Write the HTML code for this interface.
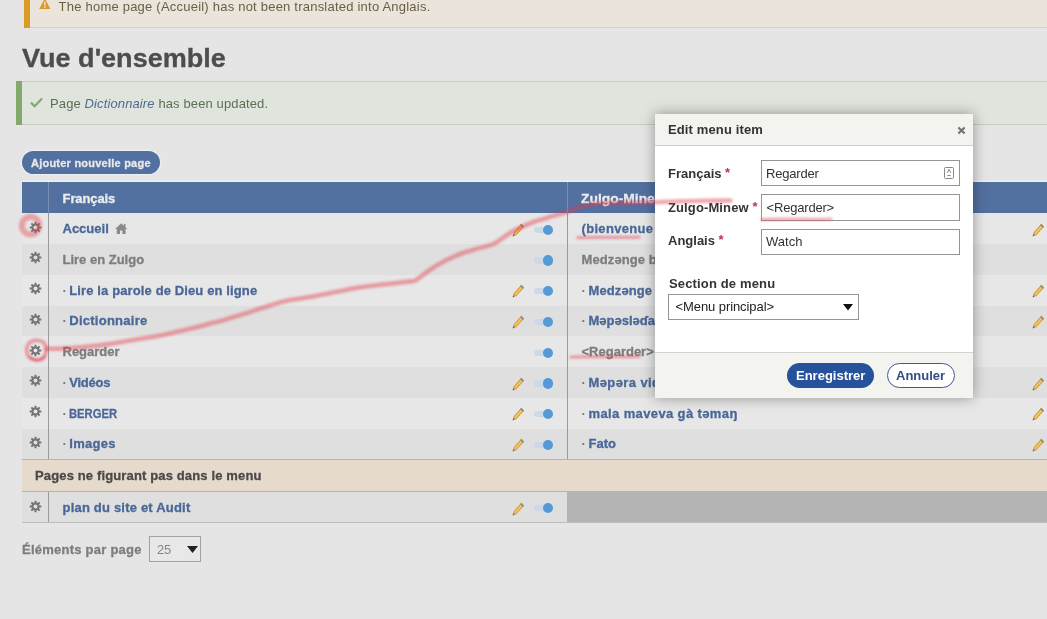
<!DOCTYPE html>
<html lang="fr">
<head>
<meta charset="utf-8">
<title>Vue d'ensemble</title>
<style>
*{box-sizing:border-box;margin:0;padding:0}
html,body{width:1047px;height:619px;overflow:hidden}
body{will-change:transform;background:#e5e5e5;font-family:"Liberation Sans",sans-serif;font-size:13px;color:#444;position:relative}
.a{position:absolute;white-space:nowrap;line-height:1}
.b{font-weight:bold}
#warn{left:24px;top:-6px;width:1040px;height:34px;background:#eae4db;border-bottom:1px solid #dfd0b6}
#warnl{left:24px;top:-6px;width:6px;height:34px;background:#db9b26}
#ok{left:16px;top:81px;width:1048px;height:44px;background:#dfe4dc;border-top:1px solid #c4cdbd;border-bottom:1px solid #c4cdbd}
#okl{left:16px;top:81px;width:6px;height:44px;background:#82a86a}
#addbtn{left:22px;top:151px;width:138px;height:23px;border-radius:12px;background:#5270a0;box-shadow:0 0 0 1.2px #eceff4}
#thead{left:22px;top:182px;width:1030px;height:31px;background:#5270a0;box-shadow:0 -1.3px 0 #edf1f8,0 1.3px 0 #eff1f6}
.row{left:22px;width:1030px}
.odd{background:#e7e7e7}
.even{background:#dfdfdf}
.vline{width:1px;background:#9a9a9a}
.nb,.lnk,.gry{-webkit-text-stroke:.3px currentColor}
.lnk{color:#4a6797;font-weight:bold}
.gry{color:#7d7d7d;font-weight:bold}
.dot{color:#777;font-weight:bold}
.trk{width:14px;height:6.2px;border-radius:3.1px;background:#cbdae8}
.knb{width:10.4px;height:10.4px;border-radius:50%;background:#5599d6}
#modal{left:655px;top:114px;width:318px;height:283.7px;background:#fff;box-shadow:0 0 13px rgba(0,0,0,.36)}
#mtitle{left:0;top:0;width:318px;height:32px;background:#f3f3ef;border-bottom:1px solid #cfcfcb}
#mfoot{left:0;top:238px;width:318px;height:45.7px;background:#f3f3ef;border-top:1px solid #d3d3cf}
.inp{left:106px;width:199px;height:26px;border:1px solid #959595;background:#fff}
.lab{color:#333;font-weight:bold}
.req{color:#c0334d;font-weight:bold;position:relative;top:-1px}
</style>
</head>
<body>

<!-- warning message -->
<div id="warn" class="a"></div><div id="warnl" class="a"></div>
<svg class="a" style="left:39px;top:-1.6px" width="11.6" height="12" viewBox="0 0 12 12"><path d="M6 0.2 L11.6 10.6 Q11.8 11.2 11.1 11.2 L0.9 11.2 Q0.2 11.2 0.4 10.6 Z" fill="#d99a2b"/><rect x="5.3" y="3.6" width="1.5" height="4" fill="#f3e6cf"/><rect x="5.3" y="8.4" width="1.5" height="1.5" fill="#f3e6cf"/></svg>
<div class="a" style="left:58.6px;top:0px;color:#6a5f45;letter-spacing:.22px">The home page (Accueil) has not been translated into Anglais.</div>

<!-- heading -->
<div class="a b nb" style="left:21.5px;top:46.4px;font-size:25px;color:#4d4d4d;transform:scaleX(1.082);transform-origin:0 0">Vue d'ensemble</div>

<!-- success message -->
<div id="ok" class="a"></div><div id="okl" class="a"></div>
<svg class="a" style="left:30px;top:97px" width="13" height="11" viewBox="0 0 13 11"><path d="M1 5.6 L4.6 9.2 L12 1.6" fill="none" stroke="#82a86a" stroke-width="2.2"/></svg>
<div class="a" style="left:50px;top:97.4px;color:#5d6e55;letter-spacing:.12px">Page <i style="color:#4f6a96">Dictionnaire</i> has been updated.</div>

<!-- add button -->
<div id="addbtn" class="a"></div>
<div class="a b nb" style="left:31px;top:157.5px;font-size:11px;color:#e9e9e9;letter-spacing:.23px">Ajouter nouvelle page</div>

<!-- table header -->
<div id="thead" class="a"></div>
<div class="a" style="left:48px;top:182px;width:1px;height:31px;background:#7a8fb3"></div>
<div class="a" style="left:567px;top:182px;width:1px;height:31px;background:#7a8fb3"></div>
<div class="a b nb" style="left:62.6px;top:192px;color:#ececec;letter-spacing:-.12px">Français</div>
<div class="a b nb" style="left:581px;top:192px;color:#ececec;transform:scaleX(1.065);transform-origin:0 0">Zulgo-Minew</div>

<!-- table rows -->
<div class="a row odd"  style="top:213px;height:31px"></div>
<div class="a row even" style="top:244px;height:31px"></div>
<div class="a row odd"  style="top:275px;height:31px"></div>
<div class="a row even" style="top:306px;height:30px"></div>
<div class="a row odd"  style="top:336px;height:31px"></div>
<div class="a row even" style="top:367px;height:31px"></div>
<div class="a row odd"  style="top:398px;height:31px"></div>
<div class="a row even" style="top:429px;height:30px"></div>
<div class="a row" style="top:459px;height:33px;background:#e6dacd;border-top:1px solid #b9b4ae;border-bottom:1px solid #b9b4ae"></div>
<div class="a row even" style="top:492px;height:31px;border-bottom:1px solid #bcbcbc"></div>
<div class="a" style="left:567px;top:492px;width:490px;height:30px;background:#b4b4b4"></div>
<div class="a vline" style="left:48px;top:213px;height:246px"></div>
<div class="a vline" style="left:567px;top:213px;height:246px"></div>
<div class="a vline" style="left:48px;top:492px;height:30px"></div>
<div class="a b nb" style="left:35px;top:468.6px;color:#4a4a4a;letter-spacing:.14px">Pages ne figurant pas dans le menu</div>

<!-- cells -->
<svg class="a" style="left:29.4px;top:220.7px" width="13" height="13" viewBox="-6.5 -6.5 13 13"><path d="M-1.47 -3.83L-1.06 -3.96L-0.92 -5.83L0.92 -5.83L1.06 -3.96L1.67 -3.75L2.05 -3.55L3.47 -4.77L4.77 -3.47L3.55 -2.05L3.83 -1.47L3.96 -1.06L5.83 -0.92L5.83 0.92L3.96 1.06L3.75 1.67L3.55 2.05L4.77 3.47L3.47 4.77L2.05 3.55L1.47 3.83L1.06 3.96L0.92 5.83L-0.92 5.83L-1.06 3.96L-1.67 3.75L-2.05 3.55L-3.47 4.77L-4.77 3.47L-3.55 2.05L-3.83 1.47L-3.96 1.06L-5.83 0.92L-5.83 -0.92L-3.96 -1.06L-3.75 -1.67L-3.55 -2.05L-4.77 -3.47L-3.47 -4.77L-2.05 -3.55Z" fill="#757575"/><circle r="1.95" fill="#e7e7e7"/></svg>
<div class="a lnk" style="left:62.5px;top:222.1px;">Accueil</div>
<svg class="a" style="left:114.7px;top:222.7px" width="12.4" height="11.6" viewBox="0 0 12.4 11.6"><path d="M6.2 0.2L0 6H1.8V11.4H5V7.6H7.4V11.4H10.6V6H12.4Z" fill="#8a8a8a"/><rect x="8.9" y="0.9" width="1.6" height="3.2" fill="#8a8a8a"/></svg>
<svg class="a" style="left:512px;top:222.8px" width="13" height="14.2" viewBox="0 0 13 13" preserveAspectRatio="none"><path d="M9.3 0.8L12 3.5L4.2 11.3L1.5 8.6Z" fill="#d59d3a"/><path d="M10 1.6L11.2 2.8L3.5 10.5L2.3 9.3Z" fill="#efcb68"/><path d="M1.5 8.6L4.2 11.3L0.7 12.2Z" fill="#b9935a"/><path d="M0.7 12.2L1.1 10.7L2.2 11.8Z" fill="#5e4a2a"/><path d="M9.3 0.8L12 3.5L10.9 4.6L8.2 1.9Z" fill="#8f8585"/></svg>
<div class="a trk" style="left:534px;top:226.65px"></div><div class="a knb" style="left:542.65px;top:224.55px"></div>
<div class="a lnk" style="left:581.5px;top:222.1px;letter-spacing:0.33px">(bienvenue à tous)</div>
<svg class="a" style="left:1031.5px;top:222.8px" width="13" height="14.2" viewBox="0 0 13 13" preserveAspectRatio="none"><path d="M9.3 0.8L12 3.5L4.2 11.3L1.5 8.6Z" fill="#d59d3a"/><path d="M10 1.6L11.2 2.8L3.5 10.5L2.3 9.3Z" fill="#efcb68"/><path d="M1.5 8.6L4.2 11.3L0.7 12.2Z" fill="#b9935a"/><path d="M0.7 12.2L1.1 10.7L2.2 11.8Z" fill="#5e4a2a"/><path d="M9.3 0.8L12 3.5L10.9 4.6L8.2 1.9Z" fill="#8f8585"/></svg>
<svg class="a" style="left:29.4px;top:251.45px" width="13" height="13" viewBox="-6.5 -6.5 13 13"><path d="M-1.47 -3.83L-1.06 -3.96L-0.92 -5.83L0.92 -5.83L1.06 -3.96L1.67 -3.75L2.05 -3.55L3.47 -4.77L4.77 -3.47L3.55 -2.05L3.83 -1.47L3.96 -1.06L5.83 -0.92L5.83 0.92L3.96 1.06L3.75 1.67L3.55 2.05L4.77 3.47L3.47 4.77L2.05 3.55L1.47 3.83L1.06 3.96L0.92 5.83L-0.92 5.83L-1.06 3.96L-1.67 3.75L-2.05 3.55L-3.47 4.77L-4.77 3.47L-3.55 2.05L-3.83 1.47L-3.96 1.06L-5.83 0.92L-5.83 -0.92L-3.96 -1.06L-3.75 -1.67L-3.55 -2.05L-4.77 -3.47L-3.47 -4.77L-2.05 -3.55Z" fill="#757575"/><circle r="1.95" fill="#dfdfdf"/></svg>
<div class="a gry" style="left:62.5px;top:252.85px;">Lire en Zulgo</div>
<div class="a trk" style="left:534px;top:257.4px"></div><div class="a knb" style="left:542.65px;top:255.3px"></div>
<div class="a gry" style="left:581.5px;top:252.85px;letter-spacing:0.1px">Medzǝnge bazlam</div>
<svg class="a" style="left:29.4px;top:282.2px" width="13" height="13" viewBox="-6.5 -6.5 13 13"><path d="M-1.47 -3.83L-1.06 -3.96L-0.92 -5.83L0.92 -5.83L1.06 -3.96L1.67 -3.75L2.05 -3.55L3.47 -4.77L4.77 -3.47L3.55 -2.05L3.83 -1.47L3.96 -1.06L5.83 -0.92L5.83 0.92L3.96 1.06L3.75 1.67L3.55 2.05L4.77 3.47L3.47 4.77L2.05 3.55L1.47 3.83L1.06 3.96L0.92 5.83L-0.92 5.83L-1.06 3.96L-1.67 3.75L-2.05 3.55L-3.47 4.77L-4.77 3.47L-3.55 2.05L-3.83 1.47L-3.96 1.06L-5.83 0.92L-5.83 -0.92L-3.96 -1.06L-3.75 -1.67L-3.55 -2.05L-4.77 -3.47L-3.47 -4.77L-2.05 -3.55Z" fill="#757575"/><circle r="1.95" fill="#e7e7e7"/></svg>
<div class="a dot" style="left:62.5px;top:283.6px">·</div>
<div class="a lnk" style="left:69.3px;top:283.6px;letter-spacing:0.12px">Lire la parole de Dieu en ligne</div>
<svg class="a" style="left:512px;top:284.3px" width="13" height="14.2" viewBox="0 0 13 13" preserveAspectRatio="none"><path d="M9.3 0.8L12 3.5L4.2 11.3L1.5 8.6Z" fill="#d59d3a"/><path d="M10 1.6L11.2 2.8L3.5 10.5L2.3 9.3Z" fill="#efcb68"/><path d="M1.5 8.6L4.2 11.3L0.7 12.2Z" fill="#b9935a"/><path d="M0.7 12.2L1.1 10.7L2.2 11.8Z" fill="#5e4a2a"/><path d="M9.3 0.8L12 3.5L10.9 4.6L8.2 1.9Z" fill="#8f8585"/></svg>
<div class="a trk" style="left:534px;top:288.15px"></div><div class="a knb" style="left:542.65px;top:286.05px"></div>
<div class="a dot" style="left:581.5px;top:283.6px">·</div>
<div class="a lnk" style="left:588.5px;top:283.6px;letter-spacing:0.1px">Medzǝnge bazlam</div>
<svg class="a" style="left:1031.5px;top:284.3px" width="13" height="14.2" viewBox="0 0 13 13" preserveAspectRatio="none"><path d="M9.3 0.8L12 3.5L4.2 11.3L1.5 8.6Z" fill="#d59d3a"/><path d="M10 1.6L11.2 2.8L3.5 10.5L2.3 9.3Z" fill="#efcb68"/><path d="M1.5 8.6L4.2 11.3L0.7 12.2Z" fill="#b9935a"/><path d="M0.7 12.2L1.1 10.7L2.2 11.8Z" fill="#5e4a2a"/><path d="M9.3 0.8L12 3.5L10.9 4.6L8.2 1.9Z" fill="#8f8585"/></svg>
<svg class="a" style="left:29.4px;top:312.95px" width="13" height="13" viewBox="-6.5 -6.5 13 13"><path d="M-1.47 -3.83L-1.06 -3.96L-0.92 -5.83L0.92 -5.83L1.06 -3.96L1.67 -3.75L2.05 -3.55L3.47 -4.77L4.77 -3.47L3.55 -2.05L3.83 -1.47L3.96 -1.06L5.83 -0.92L5.83 0.92L3.96 1.06L3.75 1.67L3.55 2.05L4.77 3.47L3.47 4.77L2.05 3.55L1.47 3.83L1.06 3.96L0.92 5.83L-0.92 5.83L-1.06 3.96L-1.67 3.75L-2.05 3.55L-3.47 4.77L-4.77 3.47L-3.55 2.05L-3.83 1.47L-3.96 1.06L-5.83 0.92L-5.83 -0.92L-3.96 -1.06L-3.75 -1.67L-3.55 -2.05L-4.77 -3.47L-3.47 -4.77L-2.05 -3.55Z" fill="#757575"/><circle r="1.95" fill="#dfdfdf"/></svg>
<div class="a dot" style="left:62.5px;top:314.35px">·</div>
<div class="a lnk" style="left:69.3px;top:314.35px;letter-spacing:0.25px">Dictionnaire</div>
<svg class="a" style="left:512px;top:315.05px" width="13" height="14.2" viewBox="0 0 13 13" preserveAspectRatio="none"><path d="M9.3 0.8L12 3.5L4.2 11.3L1.5 8.6Z" fill="#d59d3a"/><path d="M10 1.6L11.2 2.8L3.5 10.5L2.3 9.3Z" fill="#efcb68"/><path d="M1.5 8.6L4.2 11.3L0.7 12.2Z" fill="#b9935a"/><path d="M0.7 12.2L1.1 10.7L2.2 11.8Z" fill="#5e4a2a"/><path d="M9.3 0.8L12 3.5L10.9 4.6L8.2 1.9Z" fill="#8f8585"/></svg>
<div class="a trk" style="left:534px;top:318.9px"></div><div class="a knb" style="left:542.65px;top:316.8px"></div>
<div class="a dot" style="left:581.5px;top:314.35px">·</div>
<div class="a lnk" style="left:588.5px;top:314.35px;">Mǝpǝslǝɗa bazlam</div>
<svg class="a" style="left:1031.5px;top:315.05px" width="13" height="14.2" viewBox="0 0 13 13" preserveAspectRatio="none"><path d="M9.3 0.8L12 3.5L4.2 11.3L1.5 8.6Z" fill="#d59d3a"/><path d="M10 1.6L11.2 2.8L3.5 10.5L2.3 9.3Z" fill="#efcb68"/><path d="M1.5 8.6L4.2 11.3L0.7 12.2Z" fill="#b9935a"/><path d="M0.7 12.2L1.1 10.7L2.2 11.8Z" fill="#5e4a2a"/><path d="M9.3 0.8L12 3.5L10.9 4.6L8.2 1.9Z" fill="#8f8585"/></svg>
<svg class="a" style="left:29.4px;top:343.7px" width="13" height="13" viewBox="-6.5 -6.5 13 13"><path d="M-1.47 -3.83L-1.06 -3.96L-0.92 -5.83L0.92 -5.83L1.06 -3.96L1.67 -3.75L2.05 -3.55L3.47 -4.77L4.77 -3.47L3.55 -2.05L3.83 -1.47L3.96 -1.06L5.83 -0.92L5.83 0.92L3.96 1.06L3.75 1.67L3.55 2.05L4.77 3.47L3.47 4.77L2.05 3.55L1.47 3.83L1.06 3.96L0.92 5.83L-0.92 5.83L-1.06 3.96L-1.67 3.75L-2.05 3.55L-3.47 4.77L-4.77 3.47L-3.55 2.05L-3.83 1.47L-3.96 1.06L-5.83 0.92L-5.83 -0.92L-3.96 -1.06L-3.75 -1.67L-3.55 -2.05L-4.77 -3.47L-3.47 -4.77L-2.05 -3.55Z" fill="#757575"/><circle r="1.95" fill="#e7e7e7"/></svg>
<div class="a gry" style="left:62.5px;top:345.1px;">Regarder</div>
<div class="a trk" style="left:534px;top:349.65px"></div><div class="a knb" style="left:542.65px;top:347.55px"></div>
<div class="a gry" style="left:581.5px;top:345.1px;">&lt;Regarder&gt;</div>
<svg class="a" style="left:29.4px;top:374.45px" width="13" height="13" viewBox="-6.5 -6.5 13 13"><path d="M-1.47 -3.83L-1.06 -3.96L-0.92 -5.83L0.92 -5.83L1.06 -3.96L1.67 -3.75L2.05 -3.55L3.47 -4.77L4.77 -3.47L3.55 -2.05L3.83 -1.47L3.96 -1.06L5.83 -0.92L5.83 0.92L3.96 1.06L3.75 1.67L3.55 2.05L4.77 3.47L3.47 4.77L2.05 3.55L1.47 3.83L1.06 3.96L0.92 5.83L-0.92 5.83L-1.06 3.96L-1.67 3.75L-2.05 3.55L-3.47 4.77L-4.77 3.47L-3.55 2.05L-3.83 1.47L-3.96 1.06L-5.83 0.92L-5.83 -0.92L-3.96 -1.06L-3.75 -1.67L-3.55 -2.05L-4.77 -3.47L-3.47 -4.77L-2.05 -3.55Z" fill="#757575"/><circle r="1.95" fill="#dfdfdf"/></svg>
<div class="a dot" style="left:62.5px;top:375.85px">·</div>
<div class="a lnk" style="left:69.3px;top:375.85px;letter-spacing:-0.25px">Vidéos</div>
<svg class="a" style="left:512px;top:376.55px" width="13" height="14.2" viewBox="0 0 13 13" preserveAspectRatio="none"><path d="M9.3 0.8L12 3.5L4.2 11.3L1.5 8.6Z" fill="#d59d3a"/><path d="M10 1.6L11.2 2.8L3.5 10.5L2.3 9.3Z" fill="#efcb68"/><path d="M1.5 8.6L4.2 11.3L0.7 12.2Z" fill="#b9935a"/><path d="M0.7 12.2L1.1 10.7L2.2 11.8Z" fill="#5e4a2a"/><path d="M9.3 0.8L12 3.5L10.9 4.6L8.2 1.9Z" fill="#8f8585"/></svg>
<div class="a trk" style="left:534px;top:380.4px"></div><div class="a knb" style="left:542.65px;top:378.3px"></div>
<div class="a dot" style="left:581.5px;top:375.85px">·</div>
<div class="a lnk" style="left:588.5px;top:375.85px;letter-spacing:0.4px">Mǝpǝra video</div>
<svg class="a" style="left:1031.5px;top:376.55px" width="13" height="14.2" viewBox="0 0 13 13" preserveAspectRatio="none"><path d="M9.3 0.8L12 3.5L4.2 11.3L1.5 8.6Z" fill="#d59d3a"/><path d="M10 1.6L11.2 2.8L3.5 10.5L2.3 9.3Z" fill="#efcb68"/><path d="M1.5 8.6L4.2 11.3L0.7 12.2Z" fill="#b9935a"/><path d="M0.7 12.2L1.1 10.7L2.2 11.8Z" fill="#5e4a2a"/><path d="M9.3 0.8L12 3.5L10.9 4.6L8.2 1.9Z" fill="#8f8585"/></svg>
<svg class="a" style="left:29.4px;top:405.2px" width="13" height="13" viewBox="-6.5 -6.5 13 13"><path d="M-1.47 -3.83L-1.06 -3.96L-0.92 -5.83L0.92 -5.83L1.06 -3.96L1.67 -3.75L2.05 -3.55L3.47 -4.77L4.77 -3.47L3.55 -2.05L3.83 -1.47L3.96 -1.06L5.83 -0.92L5.83 0.92L3.96 1.06L3.75 1.67L3.55 2.05L4.77 3.47L3.47 4.77L2.05 3.55L1.47 3.83L1.06 3.96L0.92 5.83L-0.92 5.83L-1.06 3.96L-1.67 3.75L-2.05 3.55L-3.47 4.77L-4.77 3.47L-3.55 2.05L-3.83 1.47L-3.96 1.06L-5.83 0.92L-5.83 -0.92L-3.96 -1.06L-3.75 -1.67L-3.55 -2.05L-4.77 -3.47L-3.47 -4.77L-2.05 -3.55Z" fill="#757575"/><circle r="1.95" fill="#e7e7e7"/></svg>
<div class="a dot" style="left:62.5px;top:406.6px">·</div>
<div class="a lnk" style="left:69.3px;top:406.6px;transform:scaleX(0.865);transform-origin:0 0">BERGER</div>
<svg class="a" style="left:512px;top:407.3px" width="13" height="14.2" viewBox="0 0 13 13" preserveAspectRatio="none"><path d="M9.3 0.8L12 3.5L4.2 11.3L1.5 8.6Z" fill="#d59d3a"/><path d="M10 1.6L11.2 2.8L3.5 10.5L2.3 9.3Z" fill="#efcb68"/><path d="M1.5 8.6L4.2 11.3L0.7 12.2Z" fill="#b9935a"/><path d="M0.7 12.2L1.1 10.7L2.2 11.8Z" fill="#5e4a2a"/><path d="M9.3 0.8L12 3.5L10.9 4.6L8.2 1.9Z" fill="#8f8585"/></svg>
<div class="a trk" style="left:534px;top:411.15px"></div><div class="a knb" style="left:542.65px;top:409.05px"></div>
<div class="a dot" style="left:581.5px;top:406.6px">·</div>
<div class="a lnk" style="left:588.5px;top:406.6px;letter-spacing:0.38px">mala maveva gà tǝmaŋ</div>
<svg class="a" style="left:1031.5px;top:407.3px" width="13" height="14.2" viewBox="0 0 13 13" preserveAspectRatio="none"><path d="M9.3 0.8L12 3.5L4.2 11.3L1.5 8.6Z" fill="#d59d3a"/><path d="M10 1.6L11.2 2.8L3.5 10.5L2.3 9.3Z" fill="#efcb68"/><path d="M1.5 8.6L4.2 11.3L0.7 12.2Z" fill="#b9935a"/><path d="M0.7 12.2L1.1 10.7L2.2 11.8Z" fill="#5e4a2a"/><path d="M9.3 0.8L12 3.5L10.9 4.6L8.2 1.9Z" fill="#8f8585"/></svg>
<svg class="a" style="left:29.4px;top:435.95px" width="13" height="13" viewBox="-6.5 -6.5 13 13"><path d="M-1.47 -3.83L-1.06 -3.96L-0.92 -5.83L0.92 -5.83L1.06 -3.96L1.67 -3.75L2.05 -3.55L3.47 -4.77L4.77 -3.47L3.55 -2.05L3.83 -1.47L3.96 -1.06L5.83 -0.92L5.83 0.92L3.96 1.06L3.75 1.67L3.55 2.05L4.77 3.47L3.47 4.77L2.05 3.55L1.47 3.83L1.06 3.96L0.92 5.83L-0.92 5.83L-1.06 3.96L-1.67 3.75L-2.05 3.55L-3.47 4.77L-4.77 3.47L-3.55 2.05L-3.83 1.47L-3.96 1.06L-5.83 0.92L-5.83 -0.92L-3.96 -1.06L-3.75 -1.67L-3.55 -2.05L-4.77 -3.47L-3.47 -4.77L-2.05 -3.55Z" fill="#757575"/><circle r="1.95" fill="#dfdfdf"/></svg>
<div class="a dot" style="left:62.5px;top:437.35px">·</div>
<div class="a lnk" style="left:69.3px;top:437.35px;letter-spacing:0.3px">Images</div>
<svg class="a" style="left:512px;top:438.05px" width="13" height="14.2" viewBox="0 0 13 13" preserveAspectRatio="none"><path d="M9.3 0.8L12 3.5L4.2 11.3L1.5 8.6Z" fill="#d59d3a"/><path d="M10 1.6L11.2 2.8L3.5 10.5L2.3 9.3Z" fill="#efcb68"/><path d="M1.5 8.6L4.2 11.3L0.7 12.2Z" fill="#b9935a"/><path d="M0.7 12.2L1.1 10.7L2.2 11.8Z" fill="#5e4a2a"/><path d="M9.3 0.8L12 3.5L10.9 4.6L8.2 1.9Z" fill="#8f8585"/></svg>
<div class="a trk" style="left:534px;top:441.9px"></div><div class="a knb" style="left:542.65px;top:439.8px"></div>
<div class="a dot" style="left:581.5px;top:437.35px">·</div>
<div class="a lnk" style="left:588.5px;top:437.35px;">Fato</div>
<svg class="a" style="left:1031.5px;top:438.05px" width="13" height="14.2" viewBox="0 0 13 13" preserveAspectRatio="none"><path d="M9.3 0.8L12 3.5L4.2 11.3L1.5 8.6Z" fill="#d59d3a"/><path d="M10 1.6L11.2 2.8L3.5 10.5L2.3 9.3Z" fill="#efcb68"/><path d="M1.5 8.6L4.2 11.3L0.7 12.2Z" fill="#b9935a"/><path d="M0.7 12.2L1.1 10.7L2.2 11.8Z" fill="#5e4a2a"/><path d="M9.3 0.8L12 3.5L10.9 4.6L8.2 1.9Z" fill="#8f8585"/></svg>
<svg class="a" style="left:29.4px;top:499.7px" width="13" height="13" viewBox="-6.5 -6.5 13 13"><path d="M-1.47 -3.83L-1.06 -3.96L-0.92 -5.83L0.92 -5.83L1.06 -3.96L1.67 -3.75L2.05 -3.55L3.47 -4.77L4.77 -3.47L3.55 -2.05L3.83 -1.47L3.96 -1.06L5.83 -0.92L5.83 0.92L3.96 1.06L3.75 1.67L3.55 2.05L4.77 3.47L3.47 4.77L2.05 3.55L1.47 3.83L1.06 3.96L0.92 5.83L-0.92 5.83L-1.06 3.96L-1.67 3.75L-2.05 3.55L-3.47 4.77L-4.77 3.47L-3.55 2.05L-3.83 1.47L-3.96 1.06L-5.83 0.92L-5.83 -0.92L-3.96 -1.06L-3.75 -1.67L-3.55 -2.05L-4.77 -3.47L-3.47 -4.77L-2.05 -3.55Z" fill="#757575"/><circle r="1.95" fill="#dfdfdf"/></svg>
<div class="a lnk" style="left:62.5px;top:501.1px;letter-spacing:0.2px">plan du site et Audit</div>
<svg class="a" style="left:512px;top:501.8px" width="13" height="14.2" viewBox="0 0 13 13" preserveAspectRatio="none"><path d="M9.3 0.8L12 3.5L4.2 11.3L1.5 8.6Z" fill="#d59d3a"/><path d="M10 1.6L11.2 2.8L3.5 10.5L2.3 9.3Z" fill="#efcb68"/><path d="M1.5 8.6L4.2 11.3L0.7 12.2Z" fill="#b9935a"/><path d="M0.7 12.2L1.1 10.7L2.2 11.8Z" fill="#5e4a2a"/><path d="M9.3 0.8L12 3.5L10.9 4.6L8.2 1.9Z" fill="#8f8585"/></svg>
<div class="a trk" style="left:534px;top:504.85px"></div><div class="a knb" style="left:542.65px;top:502.75px"></div>

<!-- pager -->
<div class="a gry" style="left:22px;top:542.5px;letter-spacing:.24px">Éléments par page</div>
<div class="a" style="left:149px;top:536px;width:52px;height:25.6px;border:1px solid #a2a2a2;background:#e8e8e8"></div>
<div class="a" style="left:157px;top:543px;color:#858585;letter-spacing:-.2px">25</div>
<svg class="a" style="left:187px;top:546px" width="11" height="7" viewBox="0 0 11 7"><path d="M0 0H11L5.5 7Z" fill="#222"/></svg>

<!-- modal dialog -->
<div id="modal" class="a">
  <div id="mtitle" class="a"></div>
  <div class="a lab" style="left:13px;top:8.5px;letter-spacing:.13px">Edit menu item</div>
  <svg class="a" style="left:302px;top:12px" width="9" height="9" viewBox="0 0 9 9"><path d="M1.4 1.4L7.6 7.6M7.6 1.4L1.4 7.6" stroke="#727272" stroke-width="2.1"/></svg>

  <div class="a lab" style="left:13px;top:52.5px">Français <span class="req">*</span></div>
  <div class="a inp" style="top:46px"></div>
  <div class="a" style="left:111px;top:53px;color:#333;letter-spacing:-.2px">Regarder</div>
  <svg class="a" style="left:289px;top:53px" width="11" height="12" viewBox="0 0 11 12"><rect x="0.5" y="0.5" width="9" height="11" rx="1" fill="#fff" stroke="#888"/><path d="M3.2 5.8L5 2.4L6.8 5.8M3.4 8.5H6.6" fill="none" stroke="#888" stroke-width="1"/></svg>

  <div class="a lab" style="left:13px;top:87px;letter-spacing:.12px">Zulgo-Minew <span class="req">*</span></div>
  <div class="a inp" style="top:80px;height:27px"></div>
  <div class="a" style="left:111.6px;top:87px;color:#333;letter-spacing:-.2px">&lt;Regarder&gt;</div>

  <div class="a lab" style="left:13px;top:120.3px">Anglais <span class="req">*</span></div>
  <div class="a inp" style="top:115px"></div>
  <div class="a" style="left:111px;top:120.8px;color:#333">Watch</div>

  <div class="a lab" style="left:14px;top:163.2px;letter-spacing:.15px">Section de menu</div>
  <div class="a" style="left:13px;top:180px;width:191px;height:26px;border:1px solid #959595;background:#fff"></div>
  <div class="a" style="left:20.5px;top:186px;color:#222;letter-spacing:-.08px">&lt;Menu principal&gt;</div>
  <svg class="a" style="left:187.5px;top:190px" width="10" height="7" viewBox="0 0 10 7"><path d="M0 0H10L5 6.6Z" fill="#111"/></svg>

  <div id="mfoot" class="a"></div>
  <div class="a" style="left:132px;top:249px;width:87px;height:25px;border-radius:13px;background:#25529a"></div>
  <div class="a b" style="left:141px;top:255px;color:#fff">Enregistrer</div>
  <div class="a" style="left:232px;top:249px;width:68px;height:25px;border-radius:13px;background:#fff;border:1.2px solid #445a8c"></div>
  <div class="a b" style="left:241px;top:255px;color:#354c84">Annuler</div>
</div>

<!-- hand-drawn red annotation -->
<svg class="a" style="left:0;top:0" width="1047" height="619" viewBox="0 0 1047 619">
<defs><filter id="bl" x="-5%" y="-5%" width="110%" height="110%"><feGaussianBlur stdDeviation="0.9"/></filter></defs>
<g fill="none" stroke="#e33c4c" stroke-opacity=".44" stroke-linecap="round" stroke-linejoin="round" filter="url(#bl)">
  <ellipse cx="30.6" cy="225.6" rx="8.7" ry="8.9" stroke-width="6" stroke-opacity=".4"/>
  <path stroke-width="3.8" d="M46.2 348C45.5 342 40 339.8 35 340.4C29 341.3 26.2 346 26.6 351C27.2 357.5 33 360.6 38.5 360.2C44 359.6 47 354 46.2 348"/>
  <path stroke-width="2.6" d="M30 357.5C34 361 41 360.5 44.5 356.5"/>
  <path stroke-width="4.6" d="M46.5 348.8C49.2 348.8 56.4 348.8 62.9 348.5C69.5 348.2 78.1 347.5 85.8 346.8C93.5 346.1 101.2 345.2 108.8 344.1C116.4 343.0 124.8 341.4 131.7 340.3C138.6 339.2 145.3 338.1 150.0 337.3C154.7 336.5 155.4 336.6 160.0 335.6C164.6 334.6 170.8 333.1 177.5 331.5C184.2 329.9 194.6 327.8 200.5 326.3C206.4 324.8 209.2 323.7 213.0 322.7C216.8 321.7 220.1 321.2 223.4 320.3C226.7 319.4 228.8 318.4 232.6 317.2C236.4 316.0 242.1 314.5 246.3 313.2C250.5 311.9 254.1 310.6 258.0 309.3C261.9 308.0 266.1 306.7 270.0 305.5C273.9 304.3 277.7 303.0 281.5 302.0C285.3 301.0 287.2 300.6 292.9 299.6C298.6 298.6 308.1 297.3 315.8 295.9C323.5 294.5 331.2 292.8 338.8 291.3C346.4 289.8 354.1 288.2 361.7 287.1C369.3 286.0 377.0 285.3 384.6 284.4C392.2 283.5 402.3 282.3 407.5 281.6C412.7 280.9 411.8 282.3 415.6 280.3C419.4 278.3 426.1 272.4 430.5 269.5C434.9 266.6 438.1 264.7 441.9 262.6C445.7 260.5 449.6 258.6 453.4 256.9C457.2 255.2 461.0 253.6 464.8 252.3C468.6 251.0 471.7 250.2 476.3 248.9C480.9 247.6 488.4 245.8 492.4 244.3C496.3 242.8 496.8 241.9 500.0 239.8C503.2 237.8 507.7 234.2 511.5 232.0C515.3 229.8 519.1 228.0 522.9 226.3C526.7 224.6 530.6 223.0 534.4 221.7C538.2 220.3 542.0 219.3 545.8 218.2C549.6 217.0 553.5 215.9 557.3 214.8C561.1 213.7 565.0 212.7 568.8 211.4C572.6 210.1 576.4 208.0 580.2 206.8C584.0 205.7 587.9 205.1 591.7 204.5C595.5 203.9 597.4 203.6 603.1 203.3C608.8 203.0 617.6 203.1 626.0 202.9C634.4 202.7 644.0 202.5 653.6 202.2C663.2 201.9 674.6 201.4 683.4 201.2C692.2 200.9 698.4 200.8 706.3 200.7C714.1 200.6 726.5 200.6 730.5 200.6"/>
  <path stroke-width="3.2" d="M578 237.6C595 236.8 620 237.8 639 237.2"/>
  <path stroke-width="3.2" d="M571 357.2C590 356.2 615 357.2 639.5 356.4"/>
  <path stroke-width="3.2" d="M762 219.4C780 218.6 810 219.8 831 219"/>
</g>
</svg>
</body>
</html>
